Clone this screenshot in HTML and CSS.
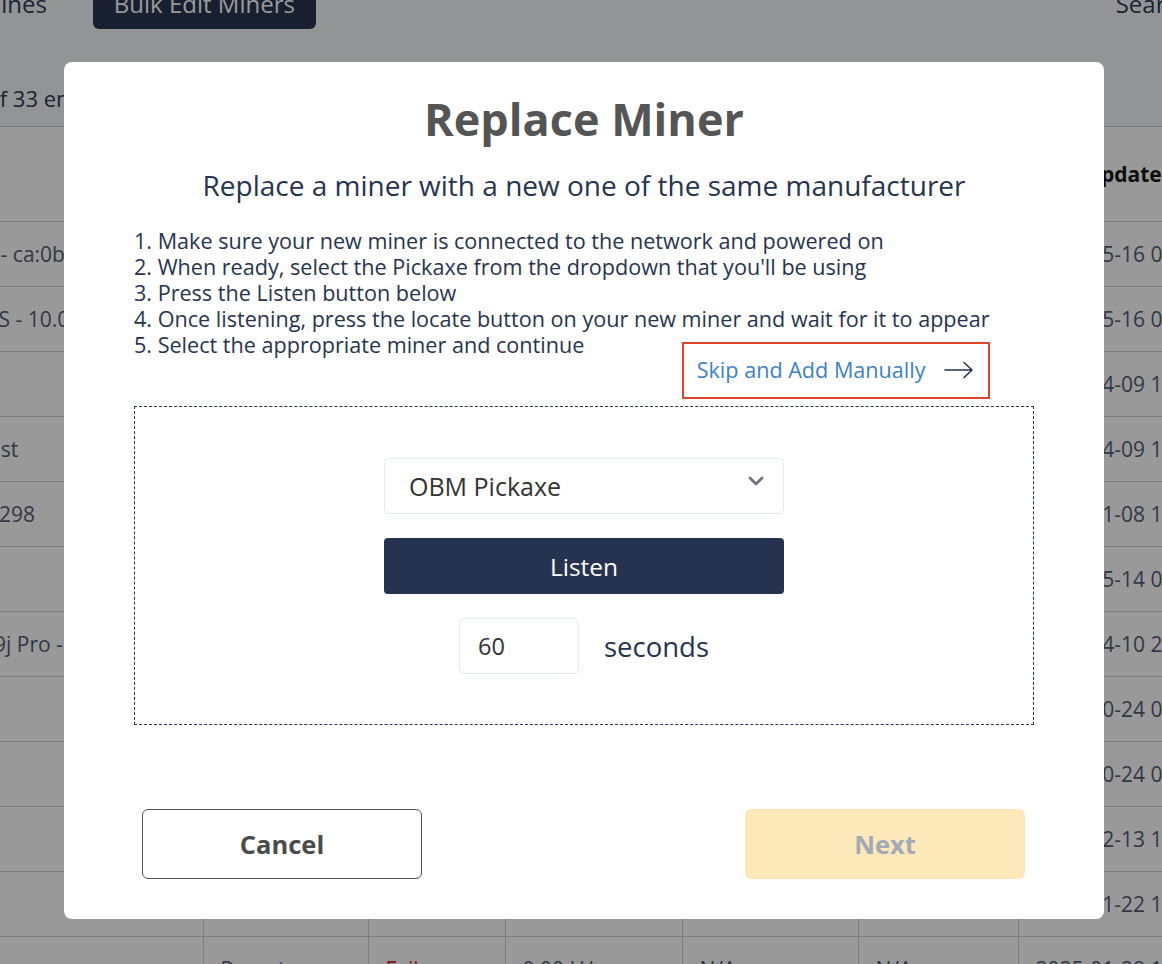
FILE: index.html
```html
<!DOCTYPE html>
<html lang="en">
<head>
<meta charset="utf-8">
<title>Replace Miner</title>
<link rel="stylesheet" href="styles.css">
</head>
<body>
<div class="page">
  <header class="topbar">
    <span class="tab">Machines</span>
    <button class="bulk" type="button">Bulk Edit Miners</button>
    <div class="search"><span class="search-label">Search:</span><span class="search-box"></span></div>
  </header>
  <div class="info">Showing 1 to 25 of 33 entries</div>
  <table class="grid">
    <colgroup>
      <col class="c-name"><col class="c-type"><col class="c-status"><col class="c-hash"><col class="c-temp"><col class="c-power"><col class="c-date">
    </colgroup>
    <thead>
      <tr><th>Name</th><th>Type</th><th>Status</th><th>Hashrate</th><th>Temp</th><th>Power</th><th>Last Updated</th></tr>
    </thead>
    <tbody>
      <tr><td>Lab Bitaxe Gamma 601 - ca:0b:7e:21</td><td>Parent</td><td class="ok">Pass</td><td>1.02 TH/s</td><td>58 °C</td><td>15 W</td><td>2025-05-16 09:14</td></tr>
      <tr><td>North Garage Iceriver KS - 10.0.0.41</td><td>Parent</td><td class="ok">Pass</td><td>1.98 TH/s</td><td>61 °C</td><td>120 W</td><td>2025-05-16 09:12</td></tr>
      <tr><td>Bitaxe Max</td><td>Child</td><td class="ok">Pass</td><td>0.48 TH/s</td><td>55 °C</td><td>12 W</td><td>2025-04-09 18:40</td></tr>
      <tr><td>Attic NerdQaxe Shelf Test</td><td>Parent</td><td class="ok">Pass</td><td>4.80 TH/s</td><td>63 °C</td><td>76 W</td><td>2025-04-09 18:32</td></tr>
      <tr><td>Basement Bitaxe Hex – 298</td><td>Parent</td><td class="ok">Pass</td><td>3.12 TH/s</td><td>60 °C</td><td>72 W</td><td>2025-01-08 11:05</td></tr>
      <tr><td>Bitaxe Ultra</td><td>Child</td><td class="ok">Pass</td><td>0.51 TH/s</td><td>54 °C</td><td>13 W</td><td>2025-05-14 07:58</td></tr>
      <tr><td>Rack 2 Big Antminer S19j Pro - 10.0.0.8</td><td>Parent</td><td class="ok">Pass</td><td>96.4 TH/s</td><td>71 °C</td><td>3050 W</td><td>2025-04-10 20:21</td></tr>
      <tr><td>Bitaxe Gamma</td><td>Child</td><td class="ok">Pass</td><td>1.10 TH/s</td><td>57 °C</td><td>16 W</td><td>2024-10-24 08:00</td></tr>
      <tr><td>Bitaxe Gamma</td><td>Child</td><td class="ok">Pass</td><td>1.07 TH/s</td><td>59 °C</td><td>16 W</td><td>2024-10-24 08:00</td></tr>
      <tr><td>Bitaxe Supra</td><td>Child</td><td class="ok">Pass</td><td>0.62 TH/s</td><td>56 °C</td><td>14 W</td><td>2025-02-13 14:47</td></tr>
      <tr><td>Bitaxe Supra</td><td>Child</td><td class="ok">Pass</td><td>0.60 TH/s</td><td>55 °C</td><td>14 W</td><td>2025-01-22 13:09</td></tr>
      <tr><td>Old Pool Rig</td><td>Parent</td><td class="fail">Fail</td><td>0.00 H/s</td><td>N/A</td><td>N/A</td><td>2025-01-28 10:30</td></tr>
    </tbody>
  </table>

  <div class="overlay">
    <div class="modal" role="dialog" aria-labelledby="dlg-title">
      <h1 class="title" id="dlg-title">Replace Miner</h1>
      <p class="subtitle">Replace a miner with a new one of the same manufacturer</p>
      <div class="steps">
        <ol class="step-list">
          <li>Make sure your new miner is connected to the network and powered on</li>
          <li>When ready, select the Pickaxe from the dropdown that you'll be using</li>
          <li>Press the Listen button below</li>
          <li>Once listening, press the locate button on your new miner and wait for it to appear</li>
          <li>Select the appropriate miner and continue</li>
        </ol>
        <button class="skip" type="button">Skip and Add Manually
          <svg class="arrow" width="30" height="18" viewBox="0 0 30 18" aria-hidden="true"><path d="M1 9H28M20 1.5L28 9L20 16.5" fill="none" stroke="#27344f" stroke-width="1.6" stroke-linecap="round" stroke-linejoin="round"/></svg>
        </button>
      </div>
      <div class="listen-box">
        <div class="select">
          <span class="select-value">OBM Pickaxe</span>
          <svg class="chevron" width="16" height="10" viewBox="0 0 16 10" aria-hidden="true"><path d="M2 2L8 8L14 2" fill="none" stroke="#6b7280" stroke-width="2.8" stroke-linecap="round" stroke-linejoin="round"/></svg>
        </div>
        <button class="listen" type="button">Listen</button>
        <div class="duration">
          <input class="seconds-input" type="text" value="60">
          <span class="seconds-label">seconds</span>
        </div>
      </div>
      <div class="actions">
        <button class="cancel" type="button">Cancel</button>
        <button class="next" type="button" disabled>Next</button>
      </div>
    </div>
  </div>
</div>
</body>
</html>
```

FILE: styles.css
```css
* { box-sizing: border-box; }

html, body {
  margin: 0;
  padding: 0;
}

body {
  font-family: "Open Sans", "Noto Sans", sans-serif;
  color: #27344f;
}

.page {
  position: relative;
  width: 1162px;
  height: 964px;
  overflow: hidden;
  background: #f6f7fa;
}

/* ---------- background page ---------- */
.topbar {
  display: flex;
  align-items: center;
  height: 52px;
  margin-top: -23px;
  margin-right: -246px;
  font-size: 24px;
  color: #2d3a55;
}

.tab {
  margin-left: -60px;
}

.bulk {
  margin-left: 46px;
  height: 52px;
  padding: 0 21px;
  border: 0;
  border-radius: 6px;
  background: #283553;
  color: #ffffff;
  font-family: inherit;
  font-size: 24px;
}

.search {
  margin-left: auto;
  display: flex;
  align-items: center;
  gap: 10px;
}

.search-box {
  display: block;
  width: 200px;
  height: 40px;
  border: 1px solid #d5d9e0;
  border-radius: 4px;
  background: #fff;
}

.info {
  margin-top: 55px;
  margin-left: -182px;
  font-size: 22px;
  line-height: 28px;
  color: #2d3a55;
}

.grid {
  margin-top: 14px;
  margin-left: -248px;
  border-collapse: collapse;
  table-layout: fixed;
  width: 1486px;
  background: #ffffff;
  font-size: 21px;
  color: #555e75;
  white-space: nowrap;
}

.c-name { width: 451px; }
.c-type { width: 165px; }
.c-status { width: 137px; }
.c-hash { width: 177px; }
.c-temp { width: 176px; }
.c-power { width: 160px; }
.c-date { width: 220px; }

.grid th,
.grid td {
  padding: 0 17px;
  text-align: left;
  overflow: hidden;
  border-top: 1px solid #d0d0d0;
  border-left: 1px solid #d0d0d0;
}

.grid th:first-child,
.grid td:first-child {
  border-left: 0;
}

.grid th {
  height: 95px;
  font-weight: 700;
  color: #161616;
}

.grid td {
  height: 65px;
}

.grid .fail {
  color: #d42a2a;
}

/* ---------- overlay + modal ---------- */
.overlay {
  position: absolute;
  inset: 0;
  background: rgba(0, 0, 0, 0.4);
  display: flex;
  justify-content: center;
  align-items: flex-start;
  padding-top: 62px;
  padding-left: 6px;
}

.modal {
  width: 1040px;
  background: #ffffff;
  border-radius: 8px;
  padding: 28px 70px 40px;
  display: flex;
  flex-direction: column;
}

.title {
  margin: 0;
  text-align: center;
  font-size: 45px;
  line-height: 58px;
  font-weight: 700;
  color: #555555;
}

.subtitle {
  margin: 19px 0 0;
  text-align: center;
  font-size: 28px;
  line-height: 36px;
  color: #27344f;
}

.steps {
  margin-top: 25px;
  display: flex;
  flex-direction: column;
  align-items: flex-end;
  width: fit-content;
}

.step-list {
  margin: 0;
  padding: 0;
  list-style: decimal inside;
  font-size: 21.6px;
  line-height: 26px;
  color: #27344f;
  align-self: flex-start;
}

.skip {
  margin-top: -16px;
  display: flex;
  align-items: center;
  gap: 18px;
  padding: 13px 14px 14px 13px;
  border: 2px solid #e2432b;
  background: #ffffff;
  color: #3b82c6;
  font-family: inherit;
  font-size: 21.6px;
  line-height: 26px;
}

.arrow {
  display: block;
}

.listen-box {
  margin-top: 7px;
  border: 1px dashed #27344f;
  padding: 51px 0 50px;
  display: flex;
  flex-direction: column;
  align-items: center;
  gap: 24px;
}

.select {
  position: relative;
  width: 400px;
  height: 56px;
  border: 1px solid #e2e8f0;
  border-radius: 5px;
  display: flex;
  align-items: center;
  padding-left: 24px;
  font-size: 25px;
  color: #333333;
}

.chevron {
  position: absolute;
  right: 19px;
  top: 17px;
}

.listen {
  width: 400px;
  height: 56px;
  border: 0;
  border-radius: 4px;
  background: #263350;
  color: #ffffff;
  font-family: inherit;
  font-size: 24.5px;
}

.duration {
  display: flex;
  align-items: center;
  gap: 25px;
}

.seconds-input {
  width: 120px;
  height: 56px;
  border: 1px solid #e2e8f0;
  border-radius: 5px;
  padding: 0 0 0 18px;
  font-family: inherit;
  font-size: 23.5px;
  color: #333333;
}

.seconds-label {
  font-size: 27.5px;
  color: #27344f;
}

.actions {
  margin-top: 84px;
  padding: 0 9px 0 8px;
  display: flex;
  justify-content: space-between;
}

.cancel,
.next {
  width: 280px;
  height: 70px;
  border-radius: 6px;
  font-family: inherit;
  font-size: 25.5px;
  font-weight: 700;
}

.cancel {
  border: 1px solid #555555;
  background: #ffffff;
  color: #4a4a4a;
}

.next {
  border: 0;
  background: #fce8b9;
  color: #a2aab8;
}
```
